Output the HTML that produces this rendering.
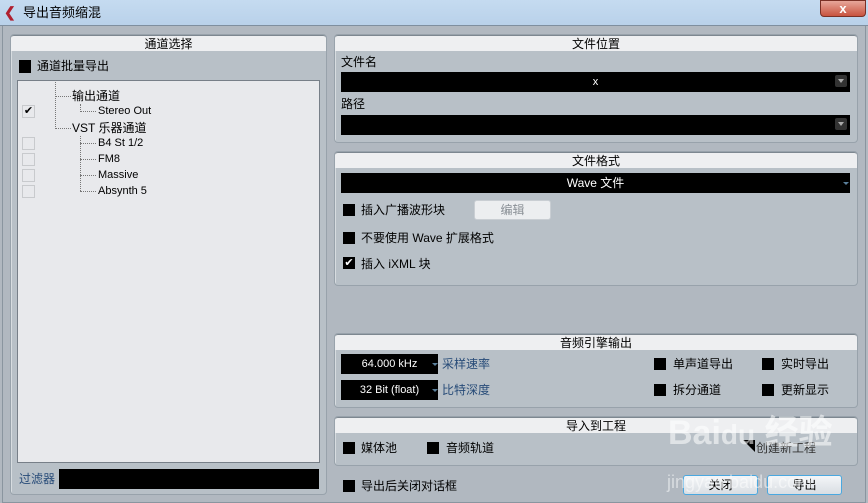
<!DOCTYPE html><html><head><meta charset="utf-8"><style>
*{margin:0;padding:0;box-sizing:border-box}
body{width:868px;height:503px;overflow:hidden;background:#b1b8c0;font-family:"Liberation Sans","Noto Sans CJK SC",sans-serif;font-size:12px;color:#000;position:relative}
.a{position:absolute}
.title{left:0;top:0;width:868px;height:26px;background:linear-gradient(#c5dbf0,#b9d1ea);border-bottom:1px solid #7f8f9f}
.panel{position:absolute;background:#b8c0c7;border:1px solid #98a2ab;border-radius:4px;box-shadow:inset 1px 1px 0 #d7dce0}
.hd{position:absolute;left:0;right:0;top:0;height:16px;background:#eeeff1;border-radius:3px 3px 0 0;text-align:center;line-height:16px;font-size:12px;border-top:1px solid #7d8790}
.blk{position:absolute;background:#000;color:#fff;text-align:center;line-height:20px;font-size:11px}
.cb{position:absolute;width:12px;height:12px;background:#000}
.lb{position:absolute;font-size:12px;line-height:14px;white-space:nowrap}
.ecb{position:absolute;width:13px;height:13px;border:1px solid #c8cacd;background:#e8e9ec;left:22px}
.dot{position:absolute;border-color:#777;border-style:dotted;border-width:0}
.btn{position:absolute;height:20px;border:1px solid #4aa8e0;border-radius:3px;background:linear-gradient(#f4f6f8,#d9dee3);text-align:center;line-height:18px}
.dd{position:absolute;width:12px;height:12px;background:#333;border-radius:2px}
.dd:after{content:"";position:absolute;left:3px;top:4px;border:3px solid transparent;border-top:4px solid #aaa}
.blue{color:#274b78}
</style></head><body>
<div class="a title"></div>
<div class="a" style="left:4px;top:6px;width:12px;height:12px;color:#b02030;font-size:14px;line-height:12px;font-weight:bold">&#10094;</div>
<div class="lb" style="left:23px;top:6px;font-size:13px">导出音频缩混</div>
<div class="a" style="left:820px;top:0;width:46px;height:17px;background:linear-gradient(#e7a79a,#c8533f);border:1px solid #7a3025;border-radius:0 0 4px 4px;color:#fff;text-align:center;font-weight:bold;line-height:15px;font-size:13px">x</div>
<div class="a" style="left:2px;top:26px;width:864px;height:477px;border:1px solid #8a959f;border-top:none"></div>

<!-- left panel -->
<div class="panel" style="left:10px;top:34px;width:317px;height:461px">
<div class="hd">通道选择</div></div>
<div class="cb" style="left:19px;top:60px;width:12px;height:13px"></div>
<div class="lb" style="left:37px;top:59px">通道批量导出</div>
<div class="a" style="left:17px;top:80px;width:303px;height:383px;background:#e8e9ec;border:1px solid #777f88"></div>
<div class="dot" style="left:55px;top:82px;height:47px;border-left-width:1px"></div>
<div class="dot" style="left:55px;top:96px;width:16px;border-top-width:1px"></div>
<div class="dot" style="left:55px;top:128px;width:16px;border-top-width:1px"></div>
<div class="lb" style="left:72px;top:89px">输出通道</div>
<div class="dot" style="left:80px;top:104px;height:8px;border-left-width:1px"></div>
<div class="dot" style="left:80px;top:111px;width:16px;border-top-width:1px"></div>
<div class="lb" style="left:98px;top:104px;font-size:11px">Stereo Out</div>
<div class="ecb" style="top:105px;font-size:11px;line-height:11px;text-align:center">&#10004;</div>
<div class="lb" style="left:72px;top:121px">VST 乐器通道</div>
<div class="dot" style="left:80px;top:136px;height:55px;border-left-width:1px"></div>
<div class="dot" style="left:80px;top:143px;width:16px;border-top-width:1px"></div>
<div class="dot" style="left:80px;top:159px;width:16px;border-top-width:1px"></div>
<div class="dot" style="left:80px;top:175px;width:16px;border-top-width:1px"></div>
<div class="dot" style="left:80px;top:191px;width:16px;border-top-width:1px"></div>
<div class="lb" style="left:98px;top:136px;font-size:11px">B4 St 1/2</div>
<div class="lb" style="left:98px;top:152px;font-size:11px">FM8</div>
<div class="lb" style="left:98px;top:168px;font-size:11px">Massive</div>
<div class="lb" style="left:98px;top:184px;font-size:11px">Absynth 5</div>
<div class="ecb" style="top:137px"></div><div class="ecb" style="top:153px"></div><div class="ecb" style="top:169px"></div><div class="ecb" style="top:185px"></div>
<div class="lb blue" style="left:19px;top:472px">过滤器</div>
<div class="blk" style="left:59px;top:469px;width:260px;height:20px"></div>

<!-- file location -->
<div class="panel" style="left:334px;top:34px;width:524px;height:109px"><div class="hd">文件位置</div></div>
<div class="lb" style="left:341px;top:55px">文件名</div>
<div class="blk" style="left:341px;top:72px;width:509px;height:20px">x</div>
<div class="dd" style="left:835px;top:75px"></div>
<div class="lb" style="left:341px;top:97px">路径</div>
<div class="blk" style="left:341px;top:115px;width:509px;height:20px"></div>
<div class="dd" style="left:835px;top:118px"></div>

<!-- file format -->
<div class="panel" style="left:334px;top:151px;width:524px;height:135px"><div class="hd">文件格式</div></div>
<div class="blk" style="left:341px;top:173px;width:509px;height:20px;font-size:12px">Wave 文件</div>
<div class="a" style="left:843px;top:182px;border:3px solid transparent;border-top:3px solid #5a7f9a"></div>
<div class="cb" style="left:343px;top:204px"></div><div class="lb" style="left:361px;top:203px">插入广播波形块</div>
<div class="btn" style="left:474px;top:200px;width:77px;border-color:#c9ced3;background:#eceef0;color:#8a9096">编辑</div>
<div class="cb" style="left:343px;top:232px"></div><div class="lb" style="left:361px;top:231px">不要使用 Wave 扩展格式</div>
<div class="cb" style="left:343px;top:257px;color:#fff;font-size:11px;line-height:12px;text-align:center">&#10004;</div><div class="lb" style="left:361px;top:257px">插入 iXML 块</div>

<!-- engine -->
<div class="panel" style="left:334px;top:333px;width:524px;height:75px"><div class="hd">音频引擎输出</div></div>
<div class="blk" style="left:341px;top:354px;width:97px;height:20px">64.000 kHz</div>
<div class="a" style="left:432px;top:363px;border:3px solid transparent;border-top:3px solid #5a7f9a"></div>
<div class="lb blue" style="left:442px;top:357px">采样速率</div>
<div class="blk" style="left:341px;top:380px;width:97px;height:20px">32 Bit (float)</div>
<div class="a" style="left:432px;top:389px;border:3px solid transparent;border-top:3px solid #5a7f9a"></div>
<div class="lb blue" style="left:442px;top:383px">比特深度</div>
<div class="cb" style="left:654px;top:358px"></div><div class="lb" style="left:673px;top:357px">单声道导出</div>
<div class="cb" style="left:762px;top:358px"></div><div class="lb" style="left:781px;top:357px">实时导出</div>
<div class="cb" style="left:654px;top:384px"></div><div class="lb" style="left:673px;top:383px">拆分通道</div>
<div class="cb" style="left:762px;top:384px"></div><div class="lb" style="left:781px;top:383px">更新显示</div>

<!-- import -->
<div class="panel" style="left:334px;top:416px;width:524px;height:50px"><div class="hd">导入到工程</div></div>
<div class="cb" style="left:343px;top:442px"></div><div class="lb" style="left:361px;top:441px">媒体池</div>
<div class="cb" style="left:427px;top:442px"></div><div class="lb" style="left:446px;top:441px">音频轨道</div>
<div class="a" style="left:743px;top:440px;border:6px solid transparent;border-top:6px solid #000;border-right:6px solid #000"></div>
<div class="lb" style="left:756px;top:441px;color:#333">创建新工程</div>

<div class="cb" style="left:343px;top:480px"></div><div class="lb" style="left:361px;top:479px">导出后关闭对话框</div>
<div class="btn" style="left:683px;top:475px;width:75px">关闭</div>
<div class="btn" style="left:767px;top:475px;width:75px">导出</div>
<div class="lb" style="left:668px;top:413px;font-size:34px;line-height:40px;color:rgba(255,255,255,.55);font-weight:bold">Bai<span style="font-size:28px">du</span> 经验</div>
<div class="lb" style="left:667px;top:472px;font-size:18px;line-height:20px;color:rgba(255,255,255,.5)">jingyan.baidu.com</div>
</body></html>
